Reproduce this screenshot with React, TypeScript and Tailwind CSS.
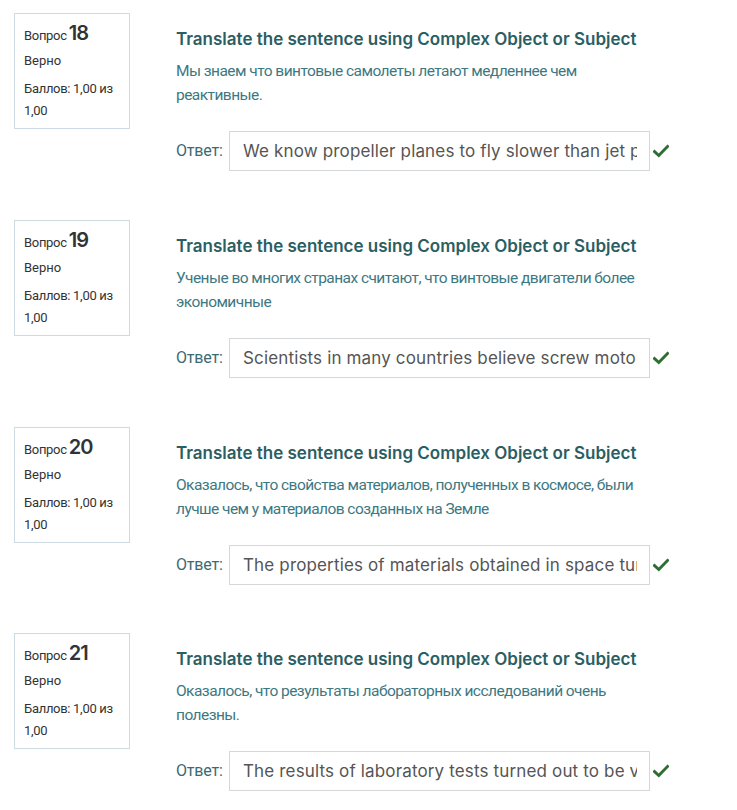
import React from "react";

const items = [
  {
    n: "18",
    q: ["Мы знаем что винтовые самолеты летают медленнее чем", "реактивные."],
    a: "We know propeller planes to fly slower than jet planes",
  },
  {
    n: "19",
    q: ["Ученые во многих странах считают, что винтовые двигатели более", "экономичные"],
    a: "Scientists in many countries believe screw motors to be more economical",
  },
  {
    n: "20",
    q: ["Оказалось, что свойства материалов, полученных в космосе, были", "лучше чем у материалов созданных на Земле"],
    a: "The properties of materials obtained in space turned out to be better",
  },
  {
    n: "21",
    q: ["Оказалось, что результаты лабораторных исследований очень", "полезны."],
    a: "The results of laboratory tests turned out to be very useful",
  },
];

function Check() {
  return (
    <svg width="16" height="14" viewBox="0 0 16 14" className="ml-[3px] shrink-0">
      <path d="M1.5 7.5 L5.8 11.5 L14.5 2.5" fill="none" stroke="#2f6e32" strokeWidth="3" strokeLinecap="square" />
    </svg>
  );
}

export default function App() {
  return (
    <div className="w-[737px] h-[810px] bg-white overflow-hidden pt-[13px] pl-[14px]">
      {items.map((it, i) => (
        <div key={it.n} className={`flex ${i === 1 ? "h-[207px]" : "h-[206.5px]"}`}>
          <div className="w-[116px] h-[116px] border border-[#cfdbe3] shrink-0 pl-[9px] pt-[8px] text-[#333] font-['Roboto',sans-serif] text-[13px]">
            <div className="flex items-baseline leading-[22px]">
              <span className="tracking-[-0.3px]">Вопрос</span>
              <span className="ml-[2px] text-[20px] font-semibold font-['Inter',sans-serif] tracking-[-1px]">{it.n}</span>
            </div>
            <div className="mt-[4px] leading-[20px]">Верно</div>
            <div className="mt-[7px] leading-[22px] pr-[4px] tracking-[-0.3px]">Баллов: 1,00 из 1,00</div>
          </div>
          <div className="ml-[46px] pt-[14px] flex flex-col">
            <div className="text-[17px] leading-[24px] font-semibold text-[#2b5e63] font-['Inter',sans-serif] tracking-[0px]">
              Translate the sentence using Complex Object or Subject
            </div>
            <div className="mt-[8px] text-[15.5px] leading-[24px] text-[#3d7882] font-['Roboto',sans-serif] tracking-[-0.55px]">
              {it.q.map((l) => (
                <div key={l}>{l}</div>
              ))}
            </div>
            <div className="mt-[24px] flex items-center h-[40px]">
              <span className="text-[16px] text-[#3b6a72] font-['Roboto',sans-serif] tracking-[-0.2px] w-[53px]">Ответ:</span>
              <input
                readOnly
                value={it.a}
                className="w-[421px] h-[40px] border border-[#d4d8da] pl-[13px] pr-[12px] text-[17px] text-[#555] font-['Inter',sans-serif] tracking-[0.15px] outline-none bg-white"
              />
              <Check />
            </div>
          </div>
        </div>
      ))}
    </div>
  );
}
